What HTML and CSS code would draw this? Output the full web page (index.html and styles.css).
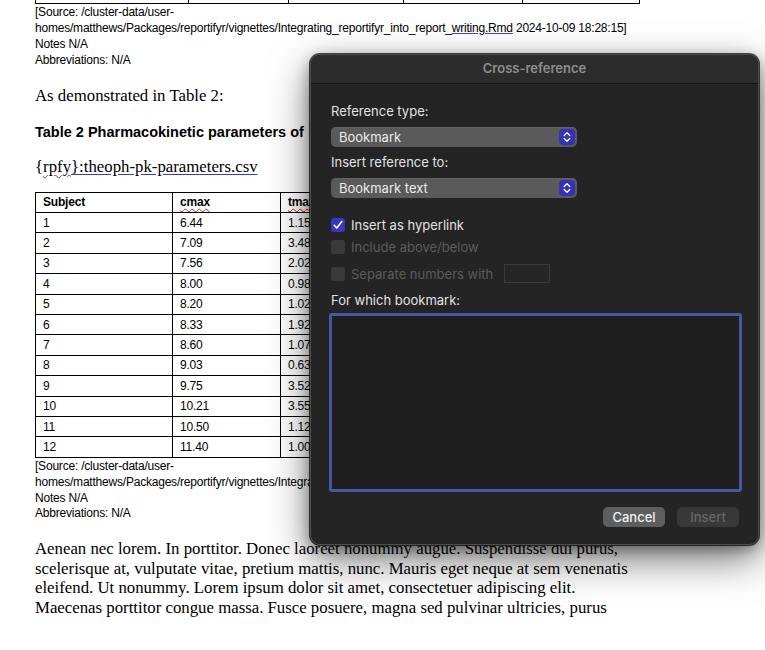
FILE: index.html
```html
<!DOCTYPE html>
<html>
<head>
<meta charset="utf-8">
<link rel="stylesheet" href="styles.css">
</head>
<body>
<div class="doc">
  <table class="prev-table">
    <tr><td class="c1"></td><td class="c2"></td><td class="c3"></td><td class="c4"></td><td class="c5"></td></tr>
  </table>
  <div class="note">
    <div>[Source: /cluster-data/user-homes/matthews/Packages/reportifyr/vignettes/Integrating_reportifyr_into_report_<span class="link">writing.Rmd</span> 2024-10-09 18:28:15]</div>
    <div>Notes N/A</div>
    <div>Abbreviations: N/A</div>
  </div>
  <p class="body-text demo">As demonstrated in Table 2:</p>
  <p class="caption">Table 2 Pharmacokinetic parameters of</p>
  <p class="body-text ref">{<span class="spell">rpfy</span><span class="link2">}:theoph-pk-parameters.csv</span></p>
  <table class="pk">
    <tr class="head"><td>Subject</td><td><span class="spell">cmax</span></td><td><span class="spell">tmax</span></td><td></td><td></td></tr>
    <tr><td>1</td><td>6.44</td><td>1.15</td><td></td><td></td></tr>
    <tr><td>2</td><td>7.09</td><td>3.48</td><td></td><td></td></tr>
    <tr><td>3</td><td>7.56</td><td>2.02</td><td></td><td></td></tr>
    <tr><td>4</td><td>8.00</td><td>0.98</td><td></td><td></td></tr>
    <tr><td>5</td><td>8.20</td><td>1.02</td><td></td><td></td></tr>
    <tr><td>6</td><td>8.33</td><td>1.92</td><td></td><td></td></tr>
    <tr><td>7</td><td>8.60</td><td>1.07</td><td></td><td></td></tr>
    <tr><td>8</td><td>9.03</td><td>0.63</td><td></td><td></td></tr>
    <tr><td>9</td><td>9.75</td><td>3.52</td><td></td><td></td></tr>
    <tr><td>10</td><td>10.21</td><td>3.55</td><td></td><td></td></tr>
    <tr><td>11</td><td>10.50</td><td>1.12</td><td></td><td></td></tr>
    <tr><td>12</td><td>11.40</td><td>1.00</td><td></td><td></td></tr>
  </table>
  <div class="note">
    <div>[Source: /cluster-data/user-homes/matthews/Packages/reportifyr/vignettes/Integrating_reportifyr_into_report_<span class="link">writing.Rmd</span> 2024-10-09 18:28:15]</div>
    <div>Notes N/A</div>
    <div>Abbreviations: N/A</div>
  </div>
  <p class="body-text lorem">Aenean nec lorem. In porttitor. Donec laoreet nonummy augue. Suspendisse dui purus, scelerisque at, vulputate vitae, pretium mattis, nunc. Mauris eget neque at sem venenatis eleifend. Ut nonummy. Lorem ipsum dolor sit amet, consectetuer adipiscing elit. Maecenas porttitor congue massa. Fusce posuere, magna sed pulvinar ultricies, purus</p>
</div>

<div class="dialog">
  <div class="titlebar">Cross-reference</div>
  <div class="dbody">
    <div class="label first">Reference type:</div>
    <div class="select">
      <span>Bookmark</span>
      <span class="stepper"><svg width="16" height="16" viewBox="0 0 16 16"><path d="M5.2 6.4 L8 3.8 L10.8 6.4 M5.2 9.6 L8 12.2 L10.8 9.6" fill="none" stroke="#fff" stroke-width="1.4" stroke-linecap="round" stroke-linejoin="round"/></svg></span>
    </div>
    <div class="label second">Insert reference to:</div>
    <div class="select">
      <span>Bookmark text</span>
      <span class="stepper"><svg width="16" height="16" viewBox="0 0 16 16"><path d="M5.2 6.4 L8 3.8 L10.8 6.4 M5.2 9.6 L8 12.2 L10.8 9.6" fill="none" stroke="#fff" stroke-width="1.4" stroke-linecap="round" stroke-linejoin="round"/></svg></span>
    </div>
    <div class="check-row r1">
      <span class="box on"><svg width="14" height="14" viewBox="0 0 14 14"><path d="M3.3 7.3 L5.8 10 L10.8 3.6" fill="none" stroke="#fff" stroke-width="1.7" stroke-linecap="round" stroke-linejoin="round"/></svg></span>
      <span>Insert as hyperlink</span>
    </div>
    <div class="check-row r2 disabled">
      <span class="box"></span>
      <span>Include above/below</span>
    </div>
    <div class="check-row r3 disabled">
      <span class="box"></span>
      <span>Separate numbers with</span>
      <span class="sep-input"></span>
    </div>
    <div class="label third">For which bookmark:</div>
    <div class="listbox"></div>
    <div class="buttons">
      <button class="btn cancel">Cancel</button>
      <button class="btn insert">Insert</button>
    </div>
  </div>
</div>
</body>
</html>
```

FILE: styles.css
```css
html, body {
  margin: 0;
  padding: 0;
  background: #ffffff;
}
body {
  width: 765px;
  height: 650px;
  overflow: hidden;
  position: relative;
}
.doc {
  width: 604px;
  padding-left: 35px;
  color: #000;
}
.prev-table {
  border-collapse: collapse;
  width: 605px;
}
.prev-table td {
  height: 3px;
  padding: 0;
  border-left: 1px solid #000;
  border-right: 1px solid #000;
  border-bottom: 1px solid #000;
  font-size: 0;
}
.prev-table .c1 { width: 153px; }
.prev-table .c2 { width: 100px; }
.prev-table .c3 { width: 115px; }
.prev-table .c4 { width: 119px; }
.prev-table .c5 { width: 117px; }

.note {
  font-family: "Liberation Sans", Arial, sans-serif;
  font-size: 12px;
  line-height: 15.9px;
  letter-spacing: -0.21px;
  padding-top: 1px;
}
.link {
  text-decoration: underline;
  text-decoration-color: #3a4fb8;
  text-underline-offset: 1px;
}
.body-text {
  font-family: "Liberation Serif", "Times New Roman", serif;
  font-size: 16.8px;
  line-height: 19.5px;
  margin: 0;
}
.demo { margin-top: 17px; }
.caption {
  font-family: "Liberation Sans", Arial, sans-serif;
  font-weight: bold;
  font-size: 14.5px;
  line-height: 18px;
  margin: 18px 0 0 0;
  white-space: nowrap;
}
.ref { margin-top: 16px; }
.spell {
  text-decoration: underline wavy #d42020;
  text-decoration-thickness: 1px;
  text-underline-offset: 2px;
}
.link2 {
  text-decoration: underline;
  text-decoration-color: #3040c0;
  text-underline-offset: 2px;
}
.pk {
  border-collapse: collapse;
  width: 605px;
  margin-top: 15px;
  font-family: "Liberation Sans", Arial, sans-serif;
  font-size: 12px;
  letter-spacing: -0.2px;
}
.pk td {
  border: 1px solid #000;
  padding: 0 0 0 7px;
  height: 19.4px;
  line-height: 14px;
  vertical-align: middle;
}
.pk td:nth-child(1) { width: 129px; }
.pk td:nth-child(2) { width: 100px; }
.pk td:nth-child(3) { width: 103px; }
.pk td:nth-child(4) { width: 103px; }
.pk .head td { font-weight: bold; }
.lorem { margin-top: 17px; }

/* Dialog */
.dialog {
  position: absolute;
  left: 310px;
  top: 54px;
  width: 449px;
  height: 491px;
  box-sizing: border-box;
  background: #242424;
  border: 1px solid #4d4d4d;
  border-radius: 10px;
  box-shadow: 0 0 0 1px rgba(0,0,0,0.7), 0 14px 40px rgba(0,0,0,0.55), 0 4px 14px rgba(0,0,0,0.35);
  font-family: Inter, "Noto Sans", sans-serif;
  font-size: 13px;
  color: #e2e2e2;
  overflow: hidden;
}
.titlebar {
  height: 29px;
  box-sizing: border-box;
  background: #2c2c2c;
  border-bottom: 1px solid #151515;
  text-align: center;
  font-weight: 600;
  font-size: 13px;
  line-height: 27px;
  color: #8e8e8e;
}
.dbody {
  padding: 0 16px 0 20px;
}
.label {
  line-height: 16px;
  height: 16px;
}
.label.first { margin-top: 19px; }
.label.second { margin-top: 7px; }
.label.third { margin-top: 9px; }
.select {
  margin-top: 8px;
  width: 246px;
  height: 20px;
  box-sizing: border-box;
  background: #5a5a5a;
  border-radius: 5px;
  display: flex;
  align-items: center;
  justify-content: space-between;
  padding: 0 2px 0 8px;
  color: #ececec;
  box-shadow: inset 0 0.5px 0 rgba(255,255,255,0.12);
}
.stepper {
  width: 16px;
  height: 16px;
  border-radius: 4px;
  background: #3433b5;
  display: flex;
}
.check-row {
  display: flex;
  align-items: center;
  gap: 6px;
  height: 16px;
}
.check-row.r1 { margin-top: 19px; }
.check-row.r2 { margin-top: 6px; }
.check-row.r3 { margin-top: 9px; height: 19px; }
.box {
  width: 14px;
  height: 14px;
  border-radius: 3px;
  background: #3a3a3a;
  display: flex;
}
.box.on { background: #3a35c4; }
.disabled { color: #5c5c5c; }
.sep-input {
  width: 46px;
  height: 19px;
  box-sizing: border-box;
  margin-left: 5px;
  background: #262626;
  border: 1px solid #3a3a3a;
}
.listbox {
  margin-top: 5px;
  margin-left: -2px;
  width: 413px;
  height: 179px;
  box-sizing: border-box;
  border: 3.5px solid #4858a0;
  border-radius: 3px;
  background: #1f1f1f;
}
.buttons {
  margin-top: 15px;
  display: flex;
  justify-content: flex-end;
  gap: 12px;
  padding-right: 3px;
}
.btn {
  font-family: Inter, "Noto Sans", sans-serif;
  font-size: 13px;
  font-weight: 500;
  width: 62px;
  height: 20px;
  border: none;
  border-radius: 5px;
  padding: 0;
  line-height: 20px;
}
.cancel {
  background: #5e5e5e;
  color: #f0f0f0;
}
.insert {
  background: #383838;
  color: #676767;
}
```
